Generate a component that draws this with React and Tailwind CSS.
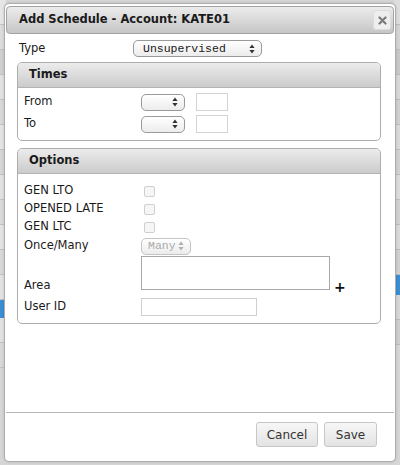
const FONT = { fontFamily: '"DejaVu Sans", Verdana, sans-serif' };

function Arrows({ color = '#333' }) {
  return (
    <svg width="6" height="10" viewBox="0 0 6 10" className="shrink-0">
      <path d="M3 0.5 L5.6 4 L0.4 4 Z" fill={color} />
      <path d="M3 9.5 L5.6 6 L0.4 6 Z" fill={color} />
    </svg>
  );
}

function FakeSelect({ width, text, disabled, pad = 6 }) {
  return (
    <div
      className={`flex items-center justify-between h-[17px] rounded-[5px] border bg-gradient-to-b from-white to-[#ececec] pr-[6px] ${
        disabled ? 'border-[#c4c4c4] text-[#aaaaaa]' : 'border-[#9a9a9a] text-[#1a1a1a]'
      }`}
      style={{ width, paddingLeft: pad }}
    >
      <span className="font-['Liberation_Mono',monospace] text-[11.5px] leading-none">{text}</span>
      <Arrows color={disabled ? '#b0b0b0' : '#333'} />
    </div>
  );
}

function Checkbox() {
  return <div className="w-[11px] h-[11px] ml-[3px] rounded-[2px] border border-[#cfcfcf] bg-[#f6f6f6]" />;
}

function PanelHeader({ title }) {
  return (
    <div className="h-[25px] flex items-center pl-[11px] border-b border-[#b3b3b3] rounded-t-[4px] bg-gradient-to-b from-[#ececec] to-[#cbcbcb]">
      <span className="text-[11.5px] font-bold text-[#1a1a1a]">{title}</span>
    </div>
  );
}

function Row({ label, children, className = '' }) {
  return (
    <div className={`flex items-center h-[18px] ${className}`}>
      <span className="w-[117px] shrink-0 text-[11.5px] text-[#1a1a1a]">{label}</span>
      {children}
    </div>
  );
}

const LEFT_ROWS = ['#e6e6e6', '#dcdcdc', '#cfcfcf', '#e2e2e2', '#d8d8d8', '#e4e4e4', '#d6d6d6', '#e2e2e2', '#dadada', '#e4e4e4', '#d8d8d8', '#e2e2e2'];
const RIGHT_ROWS = ['#dedede', '#d4d4d4', '#c8c8c8', '#d8d8d8', '#d0d0d0', '#dadada', '#d2d2d2', '#dcdcdc', '#d2d2d2', '#dadada', '#d0d0d0'];

export default function App() {
  return (
    <div className="relative w-[400px] h-[465px] overflow-hidden bg-[#d6d6d6]" style={FONT}>
      {/* page behind the modal */}
      <div className="flex justify-between h-full">
        <div className="w-[6px] flex flex-col">
          {LEFT_ROWS.map((c, i) => (
            <div key={i} className="h-[25px] border-b border-[#c2c2c2]" style={{ background: c }} />
          ))}
          <div className="h-[18px] bg-[#3b8ed3]" />
          <div className="h-[25px] border-b border-[#c2c2c2] bg-[#e2e2e2]" />
          <div className="h-[25px] border-b border-[#c2c2c2] bg-[#d8d8d8]" />
        </div>
        <div className="w-[6px] flex flex-col">
          {RIGHT_ROWS.map((c, i) => (
            <div key={i} className="h-[25px] border-b border-[#bcbcbc]" style={{ background: c }} />
          ))}
          <div className="h-[20px] bg-[#3b8ed3]" />
          <div className="h-[25px] border-b border-[#bcbcbc] bg-[#d6d6d6]" />
          <div className="h-[25px] border-b border-[#bcbcbc] bg-[#cecece]" />
        </div>
      </div>

      {/* modal */}
      <div className="absolute left-[4px] top-[3px] w-[392px] h-[459px] flex flex-col bg-white border border-[#adadad] rounded-[5px] pt-[2px] px-[1px] shadow-[0_0_3px_rgba(0,0,0,0.15)]">
        <div className="h-[28px] shrink-0 flex items-center justify-between pl-[12px] pr-[2px] rounded-[4px] border border-[#a3a3a3] bg-gradient-to-b from-[#ececec] to-[#c6c6c6]">
          <span className="text-[11.5px] font-bold text-[#1a1a1a]">Add Schedule - Account: KATE01</span>
          <div className="w-[18px] h-[20px] flex items-center justify-center rounded-[3px] border border-[#dcdcdc] bg-[#eeeeee]">
            <svg width="9" height="9" viewBox="0 0 9 9">
              <path d="M1.5 1.5 L7.5 7.5 M7.5 1.5 L1.5 7.5" stroke="#7a7a7a" strokeWidth="2.2" strokeLinecap="round" />
            </svg>
          </div>
        </div>

        <div className="pl-[11px] pr-[13px]">
          <div className="flex items-center h-[17px] mt-[6px] pl-[2px]">
            <span className="w-[114px] shrink-0 text-[11.5px] text-[#1a1a1a]">Type</span>
            <FakeSelect width={129} text="Unsupervised" pad={9} />
          </div>

          <section className="mt-[5px] border border-[#adadad] rounded-[5px]">
            <PanelHeader title="Times" />
            <div className="pl-[6px] pt-[5px] pb-[7px]">
              <Row label="From">
                <FakeSelect width={44} text="" />
                <div className="ml-[11px] w-[32px] h-[18px] border border-[#d4d4d4] bg-white" />
              </Row>
              <Row label="To" className="mt-[4px]">
                <FakeSelect width={44} text="" />
                <div className="ml-[11px] w-[32px] h-[18px] border border-[#d4d4d4] bg-white" />
              </Row>
            </div>
          </section>

          <section className="mt-[7px] border border-[#adadad] rounded-[5px]">
            <PanelHeader title="Options" />
            <div className="pl-[6px] pt-[8px] pb-[7px]">
              <Row label="GEN LTO"><Checkbox /></Row>
              <Row label="OPENED LATE"><Checkbox /></Row>
              <Row label="GEN LTC"><Checkbox /></Row>
              <Row label="Once/Many" className="mt-[1px]">
                <FakeSelect width={50} text="Many" disabled />
              </Row>
              <div className="flex items-end mt-[1px]">
                <span className="w-[117px] shrink-0 text-[11.5px] leading-[18px] text-[#1a1a1a] -mb-[4px]">Area</span>
                <div className="w-[189px] h-[34px] border border-[#a9a9a9] bg-white" />
                <span className="ml-[4px] -mb-[4px] text-[14px] font-bold leading-[14px] text-[#111]">+</span>
              </div>
              <Row label="User ID" className="mt-[8px]">
                <div className="w-[116px] h-[18px] border border-[#cfcfcf] bg-white" />
              </Row>
            </div>
          </section>
        </div>

        <div className="flex-1" />

        <div className="border-t border-[#b5b5b5] h-[49px] shrink-0 flex justify-end items-start pt-[9px] pr-[17px] gap-[6px]">
          <button className="w-[62px] h-[25px] rounded-[3px] border border-[#c6c6c6] bg-gradient-to-b from-[#f7f7f7] to-[#e3e3e3] text-[12px] text-[#333]">
            Cancel
          </button>
          <button className="w-[53px] h-[25px] rounded-[3px] border border-[#c6c6c6] bg-gradient-to-b from-[#f7f7f7] to-[#e3e3e3] text-[12px] text-[#333]">
            Save
          </button>
        </div>
      </div>
    </div>
  );
}
